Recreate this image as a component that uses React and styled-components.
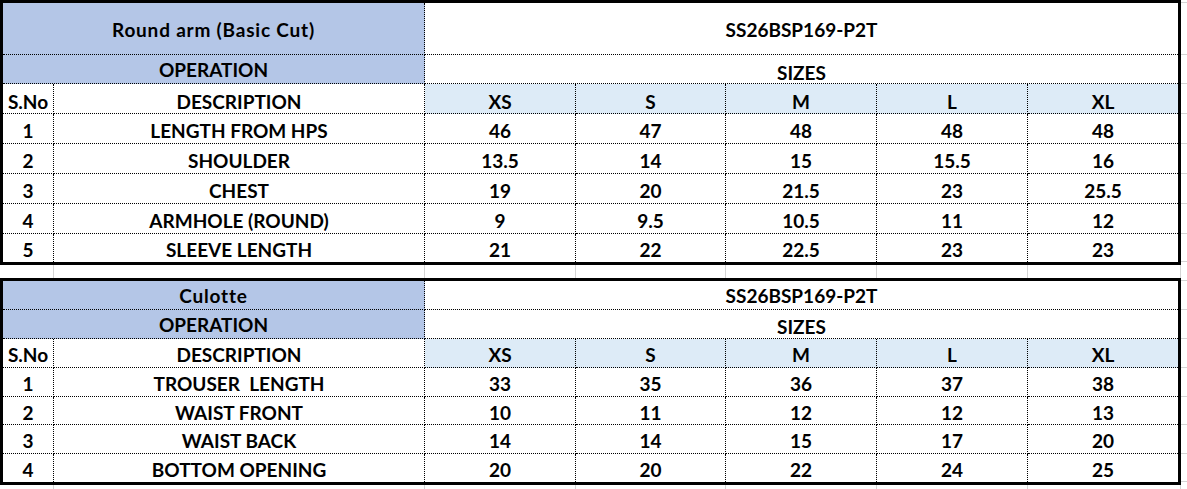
import React from 'react';
import styled, { createGlobalStyle } from 'styled-components';

const GlobalStyle = createGlobalStyle`
  html, body { margin: 0; padding: 0; background: #ffffff; }
  * { box-sizing: border-box; }
`;

const FONT = `Lato, "Liberation Sans", Arial, sans-serif`;
const COLS = [51, 371, 151, 150, 151, 151, 150];
const SHEET_COLS = [54, 371, 151, 150, 151, 151, 153];
const GRID = '#d4d4d4';
const BLUE = '#b4c6e7';
const LIGHT = '#ddebf7';

const Sheet = styled.div`
  width: 1187px;
  height: 489px;
  overflow: hidden;
  display: flex;
  flex-direction: column;
  background: #fff;
`;

const Block = styled.div`
  display: flex;
  flex: none;
`;

const Table = styled.div`
  flex: none;
  width: 1181px;
  border: 3px solid #000;
  display: grid;
  grid-template-columns: ${COLS.map((c) => c + 'px').join(' ')};
  grid-template-rows: ${(p) => p.$rows.map((r) => r + 'px').join(' ')};
  font-family: ${FONT};
  font-weight: 700;
  font-size: 19px;
  color: #000;
`;

const Cell = styled.div`
  grid-column: span ${(p) => p.$span || 1};
  display: flex;
  align-items: center;
  justify-content: center;
  padding-top: ${(p) => p.$shift}px;
  background: ${(p) => p.$bg || '#fff'};
  border-right: ${(p) => (p.$endCol ? 'none' : '1px dotted #000')};
  border-bottom: ${(p) => (p.$endRow ? 'none' : '1px dotted #000')};
  letter-spacing: ${(p) => (p.$wide ? '0.8px' : 'normal')};
  white-space: pre;
  line-height: 1;
  overflow: hidden;
`;

const Gutter = styled.div`
  flex: 1;
  display: flex;
  flex-direction: column;
`;

const GutterCell = styled.div`
  flex: none;
  height: ${(p) => p.$h}px;
  border-bottom: 1px solid ${GRID};
`;

const GridStrip = styled.div`
  flex: none;
  height: ${(p) => p.$h}px;
  display: grid;
  grid-template-columns: ${SHEET_COLS.map((c) => c + 'px').join(' ')} 1fr;
`;

const GridCell = styled.div`
  border-right: ${(p) => (p.$open ? 'none' : `1px solid ${GRID}`)};
`;

const SIZES = ['XS', 'S', 'M', 'L', 'XL'];

const tables = [
  {
    title: 'Round arm (Basic Cut)',
    code: 'SS26BSP169-P2T',
    rows: [52, 29, 30, 30, 30, 30, 30, 28],
    shifts: { title: 2, op: 1, sizes: 7, head: 5, data: 3 },
    data: [
      ['1', 'LENGTH FROM HPS', '46', '47', '48', '48', '48'],
      ['2', 'SHOULDER', '13.5', '14', '15', '15.5', '16'],
      ['3', 'CHEST', '19', '20', '21.5', '23', '25.5'],
      ['4', 'ARMHOLE (ROUND)', '9', '9.5', '10.5', '11', '12'],
      ['5', 'SLEEVE LENGTH', '21', '22', '22.5', '23', '23'],
    ],
  },
  {
    title: 'Culotte',
    code: 'SS26BSP169-P2T',
    rows: [29, 29, 29, 29, 28, 29, 28],
    shifts: { title: 1, op: 0, sizes: 4, head: 3, data: 3 },
    data: [
      ['1', 'TROUSER  LENGTH', '33', '35', '36', '37', '38'],
      ['2', 'WAIST FRONT', '10', '11', '12', '12', '13'],
      ['3', 'WAIST BACK', '14', '14', '15', '17', '20'],
      ['4', 'BOTTOM OPENING', '20', '20', '22', '24', '25'],
    ],
  },
];

function SpecTable({ t }) {
  const s = t.shifts;
  const lastRow = t.data.length - 1;
  return (
    <Block>
      <Table $rows={t.rows}>
        <Cell $span={2} $bg={BLUE} $shift={s.title} $wide>{t.title}</Cell>
        <Cell $span={5} $endCol $shift={s.title}>{t.code}</Cell>
        <Cell $span={2} $bg={BLUE} $shift={s.op}>OPERATION</Cell>
        <Cell $span={5} $endCol $shift={s.sizes}>SIZES</Cell>
        <Cell $shift={s.head}>S.No</Cell>
        <Cell $shift={s.head}>DESCRIPTION</Cell>
        {SIZES.map((z, i) => (
          <Cell key={z} $bg={LIGHT} $shift={s.head} $endCol={i === SIZES.length - 1}>
            {z}
          </Cell>
        ))}
        {t.data.map((row, r) =>
          row.map((v, c) => (
            <Cell
              key={r + '-' + c}
              $shift={s.data}
              $endCol={c === row.length - 1}
              $endRow={r === lastRow}
            >
              {v}
            </Cell>
          ))
        )}
      </Table>
      <Gutter>
        <GutterCell $h={3} />
        {t.rows.map((h, i) => (
          <GutterCell key={i} $h={h} />
        ))}
      </Gutter>
    </Block>
  );
}

function Strip({ h }) {
  return (
    <GridStrip $h={h}>
      {SHEET_COLS.map((c, i) => (
        <GridCell key={i} />
      ))}
      <GridCell $open />
    </GridStrip>
  );
}

export default function App() {
  return (
    <>
      <GlobalStyle />
      <Sheet>
        <SpecTable t={tables[0]} />
        <Strip h={13} />
        <SpecTable t={tables[1]} />
        <Strip h={10} />
      </Sheet>
    </>
  );
}
